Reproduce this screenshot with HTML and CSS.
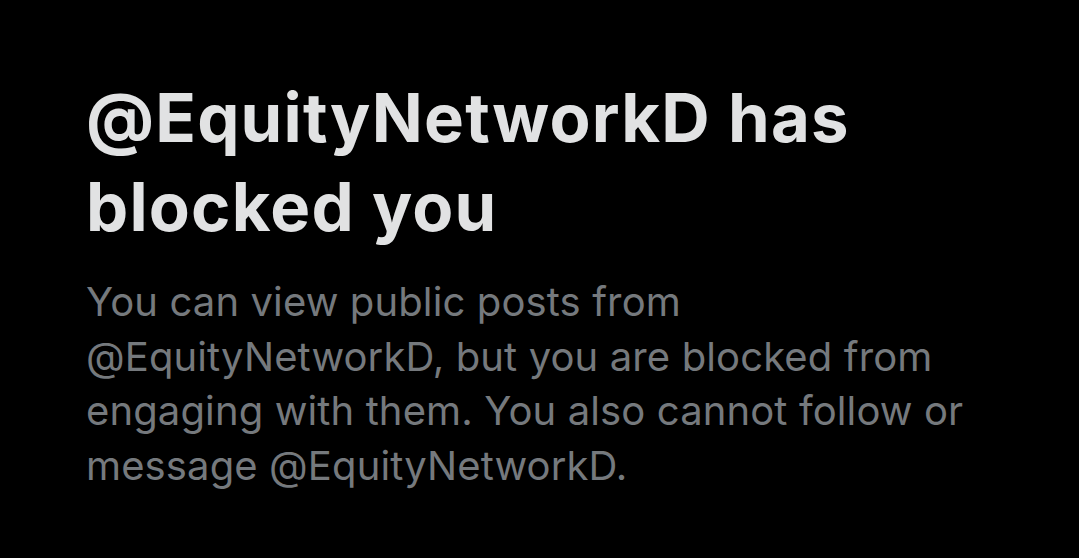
FILE: index.html
```html
<!DOCTYPE html>
<html lang="en">
<head>
  <meta charset="UTF-8">
  <meta name="viewport" content="width=device-width, initial-scale=1.0">
  <title>Blocked</title>
  <link rel="stylesheet" href="styles.css">
</head>
<body>
  <div id="blocked-container">
    <h1 class="blocked-title">@EquityNetworkD has blocked you</h1>
    <p class="blocked-text">You can view public posts from @EquityNetworkD, but you are blocked from engaging with them. You also cannot follow or message @EquityNetworkD.</p>
  </div>
</body>
</html>
```
FILE: styles.css
```css
body {
  margin: 0;
  background: #000;
  font-family: Inter, "Liberation Sans", sans-serif;
}

#blocked-container {
  padding: 73px 86px 0;
}

.blocked-title {
  margin: 0 0 24px;
  font-size: 67px;
  font-weight: 700;
  line-height: 89px;
  letter-spacing: 1.2px;
  color: #e1e2e3;
}

.blocked-text {
  margin: 0;
  font-size: 40px;
  line-height: 54.5px;
  letter-spacing: 0.12px;
  color: #75797d;
}
```
